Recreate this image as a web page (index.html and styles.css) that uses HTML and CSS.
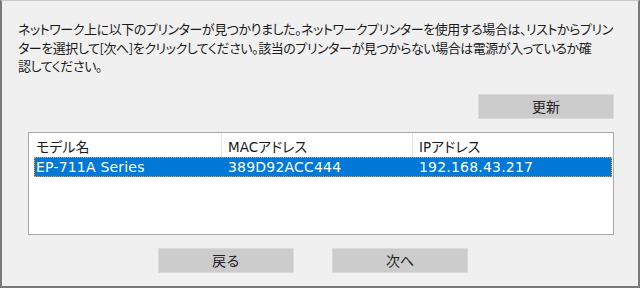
FILE: index.html
```html
<!DOCTYPE html>
<html lang="ja">
<head>
<meta charset="utf-8">
<link rel="stylesheet" href="styles.css">
</head>
<body>
<div class="window">
  <p class="msg">ネットワーク上に以下のプリンターが見つかりました。ネットワークプリンターを使用する場合は、リストからプリン<br>ターを選択して[次へ]をクリックしてください。該当のプリンターが見つからない場合は電源が入っているか確<br>認してください。</p>
  <div class="toolbar"><button class="btn">更新</button></div>
  <div class="list">
    <div class="row head">
      <div class="cell c1">モデル名</div>
      <div class="cell c2"><span class="lat">MAC</span>アドレス</div>
      <div class="cell c3"><span class="lat">IP</span>アドレス</div>
    </div>
    <div class="row sel">
      <div class="cell c1">EP-711A Series</div>
      <div class="cell c2">389D92ACC444</div>
      <div class="cell c3">192.168.43.217</div>
    </div>
  </div>
  <div class="footer">
    <button class="btn">戻る</button>
    <button class="btn">次へ</button>
  </div>
</div>
</body>
</html>
```
FILE: styles.css
```css
html, body {
  margin: 0;
  padding: 0;
  background: #f0f0f0;
}
.window {
  box-sizing: border-box;
  width: 640px;
  height: 288px;
  border-top: 1px solid #c8c8c8;
  border-left: 2px solid #7a7a7a;
  border-right: 2px solid #7a7a7a;
  border-bottom: 2px solid #7a7a7a;
  background: #f0f0f0;
  font-family: "Noto Sans CJK JP", "Noto Sans", sans-serif;
  color: #1a1a1a;
  display: flex;
  flex-direction: column;
}
.msg {
  margin: 19px 0 0 16px;
  font-size: 13px;
  line-height: 18.5px;
  white-space: nowrap;
  font-feature-settings: "palt";
  letter-spacing: -0.45px;
}
.toolbar {
  display: flex;
  justify-content: flex-end;
  padding-right: 24px;
  margin-top: 18px;
}
.btn {
  box-sizing: border-box;
  width: 136px;
  height: 25px;
  background: #cccccc;
  border: 1px solid #dadada;
  font-family: "Noto Sans CJK JP", sans-serif;
  font-size: 14px;
  color: #222;
  padding: 0;
  line-height: 22px;
}
.list {
  box-sizing: border-box;
  margin: 13px 0 0 26px;
  width: 586px;
  height: 103px;
  background: #fff;
  border: 1px solid #a8a8a8;
  padding: 0 0 0 5px;
}
.row {
  display: flex;
  font-family: "DejaVu Sans", "Noto Sans CJK JP", sans-serif;
  font-size: 14px;
  letter-spacing: 0.2px;
}
.head {
  height: 24px;
  line-height: 26px;
  color: #1a1a1a;
  font-family: "Noto Sans CJK JP", sans-serif;
  font-feature-settings: "palt";
  letter-spacing: 0;
}
.head .lat {
  font-family: "DejaVu Sans", sans-serif;
  font-size: 13.5px;
}
.head .cell {
  border-right: 1px solid #e5e5e5;
}
.head .c3 {
  border-right: none;
}
.cell {
  box-sizing: border-box;
  padding-left: 2px;
  white-space: nowrap;
}
.c1 { width: 188px; }
.c2 { width: 191px; padding-left: 6px; }
.c3 { flex: 1; padding-left: 6px; }
.sel {
  height: 20px;
  line-height: 20px;
  background: #0078d7;
  color: #fff;
  outline: 1px dotted #d8a060;
  outline-offset: -1px;
  margin-right: 1px;
}
.footer {
  display: flex;
  gap: 38px;
  padding-left: 156px;
  margin-top: 13px;
}
```
